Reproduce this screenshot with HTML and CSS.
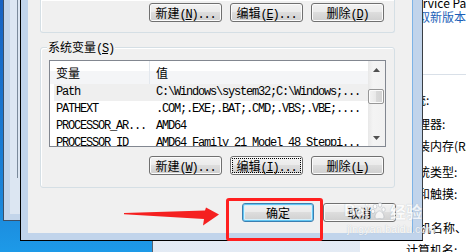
FILE: index.html
```html
<!DOCTYPE html>
<html lang="zh-CN">
<head>
    <meta charset="UTF-8">
    <meta name="viewport" content="width=device-width, initial-scale=1.0">
    <title>环境变量</title>
    <link rel="stylesheet" href="styles.css">
</head>
<body>
<div class="desk">

    <!-- system properties window (behind) -->
    <div class="win-sys">
        <div class="nav"></div>
        <div class="main">
            <div class="sp">Service Pack 1</div>
            <div class="link">获取新版本的 Windows 的更多功能</div>
            <div class="rule"></div>
            <div class="kv first">系统:</div>
            <div class="kv gap2">处理器:</div>
            <div class="kv">安装内存(RAM):</div>
            <div class="kv gap4">系统类型:</div>
            <div class="kv">笔和触摸:</div>
            <div class="kv sec">计算机名称、域和工作组设置</div>
            <div class="kv">计算机名:</div>
        </div>
    </div>

    <!-- window on the left (behind) -->
    <div class="win-back">
        <div class="inner"><div class="edge"></div></div>
    </div>

    <!-- environment variables dialog -->
    <div class="dlg">
        <div class="body">
            <div class="group user">
                <div class="btns">
                    <button class="btn">新建<span class="a">(<u>N</u>)...</span></button>
                    <button class="btn">编辑<span class="a">(<u>E</u>)...</span></button>
                    <button class="btn">删除<span class="a">(<u>D</u>)</span></button>
                </div>
            </div>

            <div class="group sys">
                <div class="legend">系统变量<span class="a">(<u>S</u>)</span></div>
                <div class="list">
                    <div class="cols">
                        <div class="lh"><span>变量</span><span>值</span></div>
                        <div class="lr sel"><span>Path</span><span>C:\Windows\system32;C:\Windows;...</span></div>
                        <div class="lr"><span>PATHEXT</span><span>.COM;.EXE;.BAT;.CMD;.VBS;.VBE;....</span></div>
                        <div class="lr"><span>PROCESSOR_AR...</span><span>AMD64</span></div>
                        <div class="lr"><span>PROCESSOR_ID</span><span>AMD64 Family 21 Model 48 Steppi...</span></div>
                    </div>
                    <div class="sb">
                        <div class="sb-btn"><svg width="7" height="4" viewBox="0 0 7 4"><path d="M0 4 3.5 0 7 4z"/></svg></div>
                        <div class="track"><div class="thumb"></div></div>
                        <div class="sb-btn"><svg width="7" height="4" viewBox="0 0 7 4"><path d="M0 0 7 0 3.5 4z"/></svg></div>
                    </div>
                </div>
                <div class="btns">
                    <button class="btn">新建<span class="a">(<u>W</u>)...</span></button>
                    <button class="btn focus">编辑<span class="a">(<u>I</u>)...</span></button>
                    <button class="btn">删除<span class="a">(<u>L</u>)</span></button>
                </div>
            </div>

            <div class="foot">
                <button class="btn default">确定</button>
                <button class="btn">取消</button>
            </div>
        </div>
    </div>

    <!-- annotations -->
    <div class="mark">
        <div class="mark-top">
            <span class="bai">Bai</span>
            <svg width="17" height="18" viewBox="0 0 17 18">
                <ellipse cx="4" cy="4.5" rx="1.8" ry="2.4"/>
                <ellipse cx="9" cy="2.8" rx="1.8" ry="2.4"/>
                <ellipse cx="2" cy="9.5" rx="1.7" ry="2.2"/>
                <ellipse cx="12.5" cy="7.5" rx="1.7" ry="2.2"/>
                <path d="M4 15c0-3 2.5-6 4.5-6s4.5 3 4.5 6c0 2-2 2-4.5 1.5C6 17 4 17 4 15z"/>
            </svg>
            <span class="jy">经验</span>
        </div>
        <div class="mark-url">jingyan.baidu.com</div>
    </div>

    <svg class="arrow" width="104" height="26" viewBox="120 204 104 26">
        <path d="M124 213 L205 210.5 L206 207.5 L219 214.5 L203 225.5 L204 219 L124 214.2 Z"/>
    </svg>

    <div class="redbox"></div>
</div>
</body>
</html>
```

FILE: styles.css
```css
* {
    box-sizing: border-box;
}
body {
    margin: 0;
    width: 466px;
    height: 252px;
    overflow: hidden;
    background: linear-gradient(#1762c2, #1b86da 80%, #1d9ae8);
    font-family: "Noto Sans CJK SC", sans-serif;
    font-size: 12px;
    color: #000;
}
.desk {
    position: relative;
    width: 466px;
    height: 252px;
    overflow: hidden;
}

/* system window */
.win-sys {
    position: absolute;
    left: 152px;
    top: 0;
    width: 330px;
    height: 270px;
    display: flex;
    border-left: 1px solid #56626f;
    overflow: hidden;
}
.nav {
    flex: none;
    width: 207px;
    background: linear-gradient(#edf2f8, #e2eaf4);
}
.main {
    flex: 1;
    min-width: 0;
    background: #fff;
    padding-left: 46px;
    white-space: nowrap;
}
.sp {
    line-height: 14px;
    margin: -4px 0 0 3px;
}
.link {
    line-height: 14px;
    color: #1c5fb8;
}
.rule {
    height: 1px;
    margin: 50px 0 0 -30px;
    background: #d9e0e8;
}
.kv {
    line-height: 22px;
}
.kv.first { margin: 14px 0 0 -4px; }
.kv.gap2 { margin-top: 2px; }
.kv.gap4 { margin-top: 4px; }
.kv.sec { margin: 12px 0 0 -11px; }

/* left background window */
.win-back {
    position: absolute;
    left: 3px;
    top: 0;
    width: 40px;
    height: 221px;
    background: #c3d5ea;
    border-left: 1px solid #3c4f66;
    border-bottom: 1px solid #3c4f66;
    padding: 0 0 6px 6px;
}
.win-back .inner {
    height: 100%;
    background: #dce6f2;
}
.win-back .edge {
    margin-left: 7px;
    width: 1px;
    height: 178px;
    background: #7b8a9b;
}

/* dialog */
.dlg {
    position: absolute;
    left: 20px;
    top: 0;
    width: 403px;
    height: 241px;
    background: #c1d4eb;
    border-left: 1px solid #000;
    border-bottom: 1px solid #000;
    border-right: 1px solid #3a3f45;
    padding: 0 9px 7px 7px;
}
.body {
    height: 100%;
    background: #f0f0f0;
    border-right: 1px solid #7db3e6;
    padding: 0 17px 0 12px;
}
.group {
    border: 1px solid #d5dfe5;
    border-radius: 3px;
    box-shadow: inset 1px 1px 0 #fff;
}
.group.user {
    border-top: none;
    border-radius: 0 0 3px 3px;
    padding: 3px 10px 10px;
}
.group.sys {
    margin-top: 14px;
    padding: 0 8px 12px;
}
.legend {
    width: max-content;
    height: 12px;
    line-height: 12px;
    margin: -7px 0 0 -2px;
    padding: 0 1px;
    background: #f0f0f0;
}
.btns {
    display: flex;
    justify-content: flex-end;
    gap: 8px;
}
.sys .btns {
    margin-top: 9px;
    padding-right: 2px;
}
.foot {
    display: flex;
    justify-content: flex-end;
    gap: 9px;
    margin: 15px -1px 0 0;
}

.btn {
    width: 73px;
    height: 19px;
    padding: 0;
    border: 1px solid #707070;
    border-radius: 3px;
    background: linear-gradient(#f2f2f2, #ebebeb 45%, #dddddd 50%, #cfcfcf);
    box-shadow: inset 0 0 0 1px #fbfbfb;
    font: 12px/17px "Noto Sans CJK SC", sans-serif;
    color: #000;
    white-space: nowrap;
}
.btn.focus {
    outline: 1px dotted #000;
    outline-offset: -3px;
}
.btn.default {
    width: 72px;
    border-color: #3c7fb1;
    box-shadow: inset 0 0 0 1px #62c6f2, inset 0 0 0 2px #d8f0fb;
}
.a {
    font-family: "Liberation Mono", monospace;
    letter-spacing: -1.2px;
}

/* list view */
.list {
    margin-top: 7px;
    height: 87px;
    display: flex;
    border: 1px solid #828790;
    background: #fff;
    overflow: hidden;
}
.cols {
    flex: 1;
    min-width: 0;
}
.lh {
    display: grid;
    grid-template-columns: 100px 1fr;
    height: 23px;
    line-height: 23px;
    background: linear-gradient(#fff 45%, #f4f5f7 45%);
}
.lh span {
    padding-left: 6px;
}
.lh span:first-child {
    border-right: 1px solid #e3e8ee;
}
.lr {
    display: grid;
    grid-template-columns: 96px 1fr;
    height: 17px;
    line-height: 17px;
    margin-left: 4px;
    white-space: nowrap;
    overflow: hidden;
    font-family: "Liberation Mono", monospace;
    letter-spacing: -1.2px;
}
.lr span {
    overflow: hidden;
}
.lr span:first-child {
    padding-left: 2px;
}
.lr span:last-child {
    padding-left: 6px;
}
.lr.sel {
    background: #efefef;
}

.sb {
    width: 17px;
    display: flex;
    flex-direction: column;
    background: linear-gradient(90deg, #e8e8e8, #f4f4f4 30%, #f1f1f1);
}
.sb-btn {
    height: 17px;
    display: flex;
    align-items: center;
    justify-content: center;
}
.sb-btn svg {
    fill: #505050;
}
.track {
    flex: 1;
    padding: 11px 1px 0 0;
}
.thumb {
    height: 15px;
    border: 1px solid #979797;
    border-radius: 2px;
    background: linear-gradient(90deg, #f3f3f3, #e8e8e8 50%, #d9d9d9 50%, #d2d2d2);
    box-shadow: inset 0 0 0 1px #fbfbfb;
}

/* annotations */
.mark {
    position: absolute;
    left: 344px;
    top: 199px;
    color: #fff;
    opacity: 0.75;
    text-shadow: 0 0 1px #9aa4ae;
}
.mark-top {
    display: flex;
    align-items: center;
    gap: 2px;
    height: 24px;
}
.mark-top svg {
    fill: #fff;
    stroke: #a7b0b9;
    stroke-width: 0.6;
}
.bai {
    font: bold 16px "Liberation Sans", sans-serif;
}
.jy {
    font-size: 16px;
    font-weight: bold;
}
.mark-url {
    font: 11px/12px "Liberation Sans", sans-serif;
    margin-left: 3px;
}
.arrow {
    position: absolute;
    left: 120px;
    top: 204px;
    fill: #f52020;
}
.redbox {
    position: absolute;
    left: 226px;
    top: 198px;
    width: 97px;
    height: 43px;
    border: 3px solid #ff1f1f;
    border-radius: 3px;
}
```
